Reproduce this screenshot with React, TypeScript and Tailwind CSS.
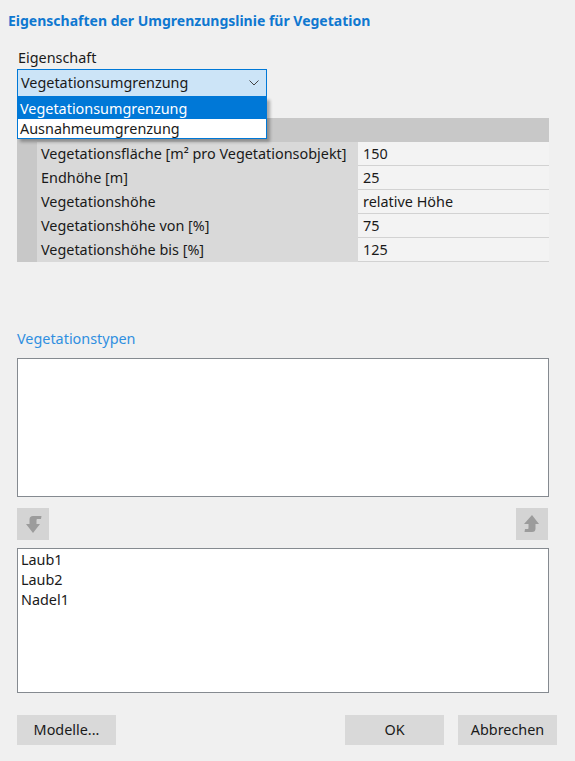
import React from "react";

const rows: [string, string][] = [
  ["Vegetationsfläche [m² pro Vegetationsobjekt]", "150"],
  ["Endhöhe [m]", "25"],
  ["Vegetationshöhe", "relative Höhe"],
  ["Vegetationshöhe von [%]", "75"],
  ["Vegetationshöhe bis [%]", "125"],
];

function DownArrow() {
  return (
    <svg width="32" height="32" viewBox="0 0 32 32">
      <path d="M16 25 L9 16 L12.5 16 L12.5 11.5 Q12.5 8 16 8 L24.5 8 L24 11 L20 11 Q19.5 11 19.5 12.5 L19.5 16 L23 16 Z" fill="#9c9c9c" />
    </svg>
  );
}

function UpArrow() {
  return (
    <svg width="32" height="32" viewBox="0 0 32 32">
      <path d="M16 7 L23 16 L19.5 16 L19.5 20.5 Q19.5 24 16 24 L8.5 24 L9 21 L12 21 Q12.5 21 12.5 19.5 L12.5 16 L8 16 Z" fill="#9c9c9c" />
    </svg>
  );
}

export default function App() {
  return (
    <div
      className="relative w-[575px] h-[761px] bg-[#f0f0f0] text-[14.4px] text-[#1a1a1a] overflow-hidden"
      style={{ fontFamily: '"Segoe UI", "Noto Sans", Arial, sans-serif' }}
    >
      <div className="pl-[8px] pt-[10px] h-[47px] font-bold text-[#0f78d0] text-[14px] leading-[22px]">
        Eigenschaften der Umgrenzungslinie für Vegetation
      </div>
      <div className="px-[17px]">
        <div className="leading-[22px] h-[22px] pl-[1px]">Eigenschaft</div>
        <div className="relative">
          <div className="w-[250px] h-[28px] border border-[#0078d7] bg-[#cce4f7] flex items-center justify-between pl-[3px] pr-[7px]">
            <span>Vegetationsumgrenzung</span>
            <svg width="10" height="6" viewBox="0 0 10 6">
              <path d="M0.5 0.5 L5 5 L9.5 0.5" stroke="#444" strokeWidth="1" fill="none" />
            </svg>
          </div>
          <div className="absolute left-0 top-[28px] z-10 w-[250px] border border-[#0078d7] bg-white shadow-[3px_3px_3px_rgba(0,0,0,0.3)]">
            <div className="h-[21px] leading-[21px] bg-[#0078d7] text-white pl-[2px]">Vegetationsumgrenzung</div>
            <div className="h-[19px] leading-[19px] pl-[2px]">Ausnahmeumgrenzung</div>
          </div>
        </div>
        <div className="mt-[21px] w-[532px]">
          <div className="h-[24px] bg-[#c8c8c8]" />
          {rows.map(([k, v]) => (
            <div key={k} className="flex h-[24px]">
              <div className="w-[20px] bg-[#c8c8c8]" />
              <div className="w-[321px] bg-[#d9d9d9] pl-[4px] leading-[24px] whitespace-nowrap">{k}</div>
              <div className="flex-1 bg-[#f3f3f3] border-b border-[#d2d2d2] pl-[5px] leading-[23px]">{v}</div>
            </div>
          ))}
        </div>
        <div className="mt-[66px] h-[30px] text-[#2f8fe0] leading-[22px]">Vegetationstypen</div>
        <div className="w-[532px] h-[139px] bg-white border border-[#858a90]" />
        <div className="mt-[11px] flex justify-between w-[532px]">
          <div className="w-[32px] h-[32px] bg-[#d4d4d4]">
            <DownArrow />
          </div>
          <div className="w-[32px] h-[32px] bg-[#d4d4d4] mr-[1px]">
            <UpArrow />
          </div>
        </div>
        <div className="mt-[8px] w-[532px] h-[145px] bg-white border border-[#858a90] pl-[3px] pt-[1px]">
          <div className="leading-[20px]">Laub1</div>
          <div className="leading-[20px]">Laub2</div>
          <div className="leading-[20px]">Nadel1</div>
        </div>
        <div className="mt-[22px] flex">
          <div className="w-[99px] h-[30px] bg-[#d9d9d9] flex items-center justify-center">Modelle...</div>
          <div className="ml-auto w-[99px] h-[30px] bg-[#d9d9d9] flex items-center justify-center">OK</div>
          <div className="ml-[14px] mr-[1px] w-[99px] h-[30px] bg-[#d9d9d9] flex items-center justify-center">Abbrechen</div>
        </div>
      </div>
    </div>
  );
}
